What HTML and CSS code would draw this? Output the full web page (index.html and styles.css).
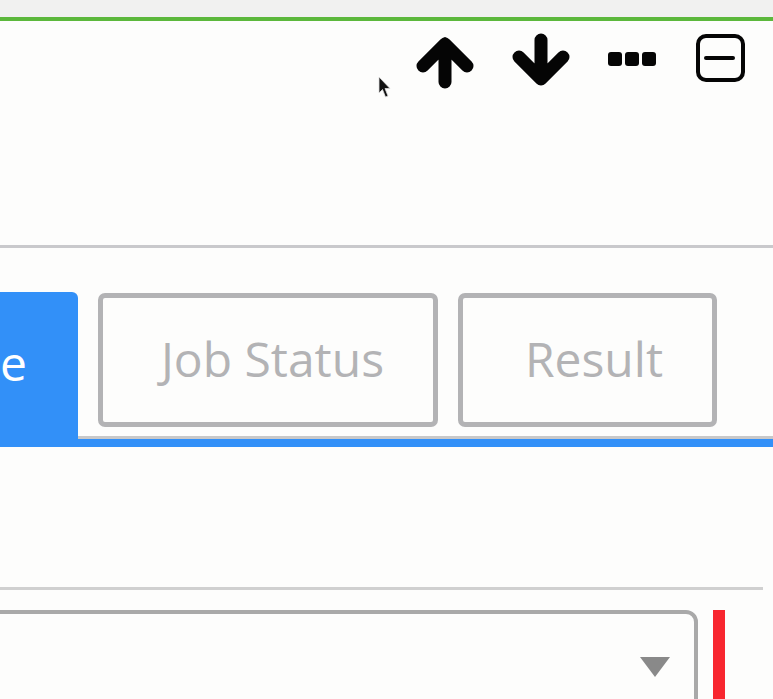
FILE: index.html
```html
<!DOCTYPE html>
<html>
<head>
<meta charset="utf-8">
<link rel="stylesheet" href="styles.css">
</head>
<body>
<div class="page">
  <div class="topstrip"></div>
  <div class="greenline"></div>
  <div class="toolbar">
    <svg class="ic ic-up" width="60" height="56" viewBox="0 0 60 56"><path d="M30 49V11M8 33L30 11L52 33" fill="none" stroke="#050505" stroke-width="13" stroke-linecap="round" stroke-linejoin="round"/></svg>
    <svg class="ic ic-down" width="60" height="56" viewBox="0 0 60 56"><path d="M30 7V45M8 24L30 46L52 24" fill="none" stroke="#050505" stroke-width="13" stroke-linecap="round" stroke-linejoin="round"/></svg>
    <svg class="ic ic-dots" width="54" height="56" viewBox="0 0 54 56"><rect x="2" y="19" width="14" height="14" rx="3" fill="#050505"/><rect x="19" y="19" width="14" height="14" rx="3" fill="#050505"/><rect x="36" y="19" width="14" height="14" rx="3" fill="#050505"/></svg>
    <svg class="ic ic-min" width="53" height="56" viewBox="0 0 53 56"><rect x="4" y="3" width="45" height="44" rx="8" fill="none" stroke="#050505" stroke-width="4"/><path d="M12 25H39" stroke="#050505" stroke-width="4" stroke-linecap="round"/></svg>
  </div>
  <svg class="cursor" width="16" height="24" viewBox="0 0 16 24"><path d="M2 1V17L5.5 13.5L8.5 21L11 20L8 12.5H13Z" fill="#111" stroke="#ddd" stroke-width="0.8"/></svg>
  <div class="divider"></div>
  <div class="tabbar">
    <div class="tab tab-active">e</div>
    <div class="tabs-rest">
      <div class="tab tab-btn tab-job">Job Status</div>
      <div class="tab tab-btn tab-result">Result</div>
    </div>
  </div>
  <div class="gap-area"></div>
  <div class="divider2"></div>
  <div class="form-row">
    <div class="select-box">
      <span class="caret"></span>
    </div>
    <div class="req-bar"></div>
  </div>
</div>
</body>
</html>
```

FILE: styles.css
```css
html, body {
  margin: 0;
  padding: 0;
  background: #fdfdfc;
  font-family: "Open Sans", "Noto Sans", sans-serif;
  overflow: hidden;
}
.page {
  position: relative;
  width: 773px;
  height: 699px;
  overflow: hidden;
}
.topstrip {
  height: 17px;
  background: #f1f1f0;
}
.greenline {
  height: 4px;
  background: #5cb83c;
}
.toolbar {
  height: 224px;
  box-sizing: border-box;
  padding-top: 12px;
  padding-right: 26px;
  display: flex;
  justify-content: flex-end;
  align-items: flex-start;
}
.ic { display: block; flex: none; }
.ic-up { margin-right: 36px; }
.ic-down { margin-right: 35px; }
.ic-dots { margin-right: 34px; }
.cursor {
  position: absolute;
  left: 377px;
  top: 76px;
  filter: blur(0.4px);
}
.divider {
  height: 3px;
  background: #c9c9cc;
}
.tabbar {
  margin-top: 44px;
  display: flex;
  align-items: stretch;
  border-bottom: 8px solid #3290f8;
}
.tab {
  box-sizing: border-box;
  font-size: 48px;
  line-height: 1;
  display: flex;
  align-items: center;
}
.tab-active {
  width: 78px;
  flex: none;
  background: #3290f8;
  color: #ffffff;
  border-top-right-radius: 6px;
  padding: 0 0 6px 0;
  justify-content: flex-start;
}
.tabs-rest {
  flex: 1;
  display: flex;
  gap: 20px;
  padding: 1px 0 9px 20px;
  border-bottom: 3px solid #c8c8c9;
}
.tab-btn {
  height: 134px;
  flex: none;
  border: 5px solid #b3b3b5;
  border-radius: 7px;
  color: #b3b3b5;
  background: #fdfdfc;
  padding-right: 49px;
  padding-bottom: 3px;
  justify-content: flex-end;
}
.tab-job { width: 340px; }
.tab-result { width: 259px; }
.gap-area {
  height: 140px;
}
.divider2 {
  width: 763px;
  height: 3px;
  background: #d0d0d0;
}
.form-row {
  display: flex;
  align-items: flex-start;
  padding-top: 20px;
}
.select-box {
  position: relative;
  margin-left: -10px;
  width: 708px;
  height: 120px;
  box-sizing: border-box;
  border: 4px solid #a9a9a9;
  border-top-right-radius: 12px;
  flex: none;
}
.caret {
  position: absolute;
  right: 24px;
  top: 43px;
  width: 0;
  height: 0;
  border-left: 15px solid transparent;
  border-right: 15px solid transparent;
  border-top: 20px solid #898989;
}
.req-bar {
  margin-left: 15px;
  width: 12px;
  height: 120px;
  background: #f8262f;
}
```
